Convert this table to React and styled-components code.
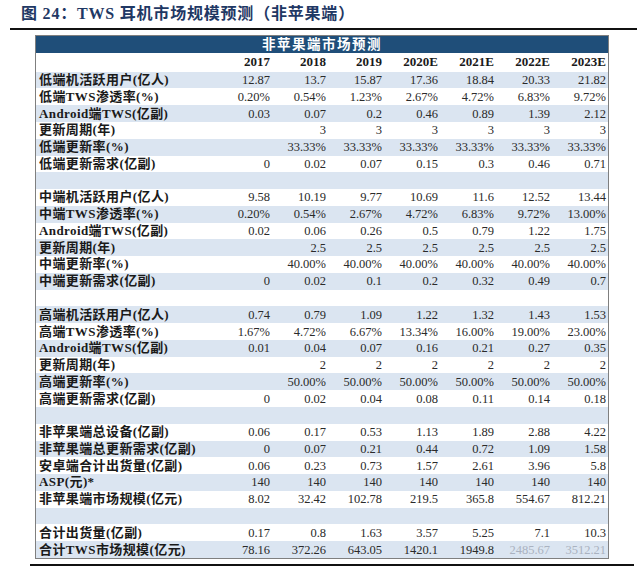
import React from "react";
import styled, { createGlobalStyle } from "styled-components";

const years = ["2017", "2018", "2019", "2020E", "2021E", "2022E", "2023E"];

const rows = [
  ["低端机活跃用户(亿人)", "12.87", "13.7", "15.87", "17.36", "18.84", "20.33", "21.82"],
  ["低端TWS渗透率(%)", "0.20%", "0.54%", "1.23%", "2.67%", "4.72%", "6.83%", "9.72%"],
  ["Android端TWS(亿副)", "0.03", "0.07", "0.2", "0.46", "0.89", "1.39", "2.12"],
  ["更新周期(年)", "", "3", "3", "3", "3", "3", "3"],
  ["低端更新率(%)", "", "33.33%", "33.33%", "33.33%", "33.33%", "33.33%", "33.33%"],
  ["低端更新需求(亿副)", "0", "0.02", "0.07", "0.15", "0.3", "0.46", "0.71"],
  null,
  ["中端机活跃用户(亿人)", "9.58", "10.19", "9.77", "10.69", "11.6", "12.52", "13.44"],
  ["中端TWS渗透率(%)", "0.20%", "0.54%", "2.67%", "4.72%", "6.83%", "9.72%", "13.00%"],
  ["Android端TWS(亿副)", "0.02", "0.06", "0.26", "0.5", "0.79", "1.22", "1.75"],
  ["更新周期(年)", "", "2.5", "2.5", "2.5", "2.5", "2.5", "2.5"],
  ["中端更新率(%)", "", "40.00%", "40.00%", "40.00%", "40.00%", "40.00%", "40.00%"],
  ["中端更新需求(亿副)", "0", "0.02", "0.1", "0.2", "0.32", "0.49", "0.7"],
  null,
  ["高端机活跃用户(亿人)", "0.74", "0.79", "1.09", "1.22", "1.32", "1.43", "1.53"],
  ["高端TWS渗透率(%)", "1.67%", "4.72%", "6.67%", "13.34%", "16.00%", "19.00%", "23.00%"],
  ["Android端TWS(亿副)", "0.01", "0.04", "0.07", "0.16", "0.21", "0.27", "0.35"],
  ["更新周期(年)", "", "2", "2", "2", "2", "2", "2"],
  ["高端更新率(%)", "", "50.00%", "50.00%", "50.00%", "50.00%", "50.00%", "50.00%"],
  ["高端更新需求(亿副)", "0", "0.02", "0.04", "0.08", "0.11", "0.14", "0.18"],
  null,
  ["非苹果端总设备(亿副)", "0.06", "0.17", "0.53", "1.13", "1.89", "2.88", "4.22"],
  ["非苹果端总更新需求(亿副)", "0", "0.07", "0.21", "0.44", "0.72", "1.09", "1.58"],
  ["安卓端合计出货量(亿副)", "0.06", "0.23", "0.73", "1.57", "2.61", "3.96", "5.8"],
  ["ASP(元)*", "140", "140", "140", "140", "140", "140", "140"],
  ["非苹果端市场规模(亿元)", "8.02", "32.42", "102.78", "219.5", "365.8", "554.67", "812.21"],
  null,
  ["合计出货量(亿副)", "0.17", "0.8", "1.63", "3.57", "5.25", "7.1", "10.3"],
  ["合计TWS市场规模(亿元)", "78.16", "372.26", "643.05", "1420.1", "1949.8", "2485.67", "3512.21"],
];

// the last two figures sit under a faded watermark
const fadedCells = ["2485.67", "3512.21"];

const App = () => {
  return (
    <StyledPage>
      <GlobalStyle />
      <StyledTitle>图 24：TWS 耳机市场规模预测（非苹果端）</StyledTitle>
      <StyledRule />
      <StyledTable>
        <StyledBand>非苹果端市场预测</StyledBand>
        <StyledRow $year>
          <StyledLabel />
          {years.map((y) => (
            <StyledYear key={y}>{y}</StyledYear>
          ))}
        </StyledRow>
        {rows.map((row, i) => (
          <StyledRow key={i} $shaded={i % 2 === 0}>
            {row ? (
              <>
                <StyledLabel>{row[0]}</StyledLabel>
                {row.slice(1).map((v, j) => (
                  <StyledCell key={j} $faded={fadedCells.includes(v)}>
                    {v}
                  </StyledCell>
                ))}
              </>
            ) : null}
          </StyledRow>
        ))}
      </StyledTable>
      <StyledBottomRule />
    </StyledPage>
  );
};

export default App;

const GlobalStyle = createGlobalStyle`
  body {
    margin: 0;
    background: #fff;
    font-family: "Liberation Serif", "Noto Sans CJK SC", serif;
  }
`;

const StyledPage = styled.div`
  width: 640px;
  height: 567px;
  overflow: hidden;
`;

const StyledTitle = styled.h1`
  margin: 0;
  height: 28px;
  padding-left: 21px;
  line-height: 27px;
  font-size: 16px;
  font-weight: bold;
  letter-spacing: 0.8px;
  color: #1f3864;
  font-family: "Liberation Serif", "Noto Sans CJK SC", serif;
`;

const StyledRule = styled.div`
  margin: 0 3px 0 10px;
  height: 2px;
  background: #111;
`;

const StyledTable = styled.div`
  box-sizing: border-box;
  width: 574px;
  margin: 5px 0 0 35px;
  border: 1px solid #7f7f7f;
`;

const StyledBand = styled.div`
  height: 17px;
  line-height: 17px;
  background: #1f4e79;
  color: #fff;
  text-align: center;
  font-size: 13.5px;
  font-weight: bold;
  letter-spacing: 1.5px;
  font-family: "Liberation Serif", "Noto Sans CJK SC", serif;
`;

const StyledRow = styled.div`
  display: grid;
  grid-template-columns: 180px repeat(7, 56px);
  align-items: center;
  height: ${(p) => (p.$year ? "18.7px" : "16.77px")};
  background: ${(p) => (p.$shaded ? "#dbe5f1" : "#fff")};
`;

const StyledLabel = styled.div`
  padding-left: 3px;
  height: 16px;
  line-height: 16px;
  font-size: 13px;
  font-weight: bold;
  letter-spacing: 0.4px;
  color: #1a1a1a;
  white-space: nowrap;
  overflow: visible;
  font-family: "Liberation Serif", "Noto Sans CJK SC", serif;
`;

const StyledCell = styled.div`
  padding-right: 2px;
  height: 16px;
  line-height: 16px;
  text-align: right;
  font-size: 12.5px;
  color: ${(p) => (p.$faded ? "#aab2c0" : "#2a2a2a")};
  white-space: nowrap;
`;

const StyledYear = styled(StyledCell)`
  font-size: 13px;
  font-weight: bold;
  color: #1a1a1a;
`;

const StyledBottomRule = styled.div`
  margin: 5px 6px 0 30px;
  height: 2px;
  background: #111;
`;
